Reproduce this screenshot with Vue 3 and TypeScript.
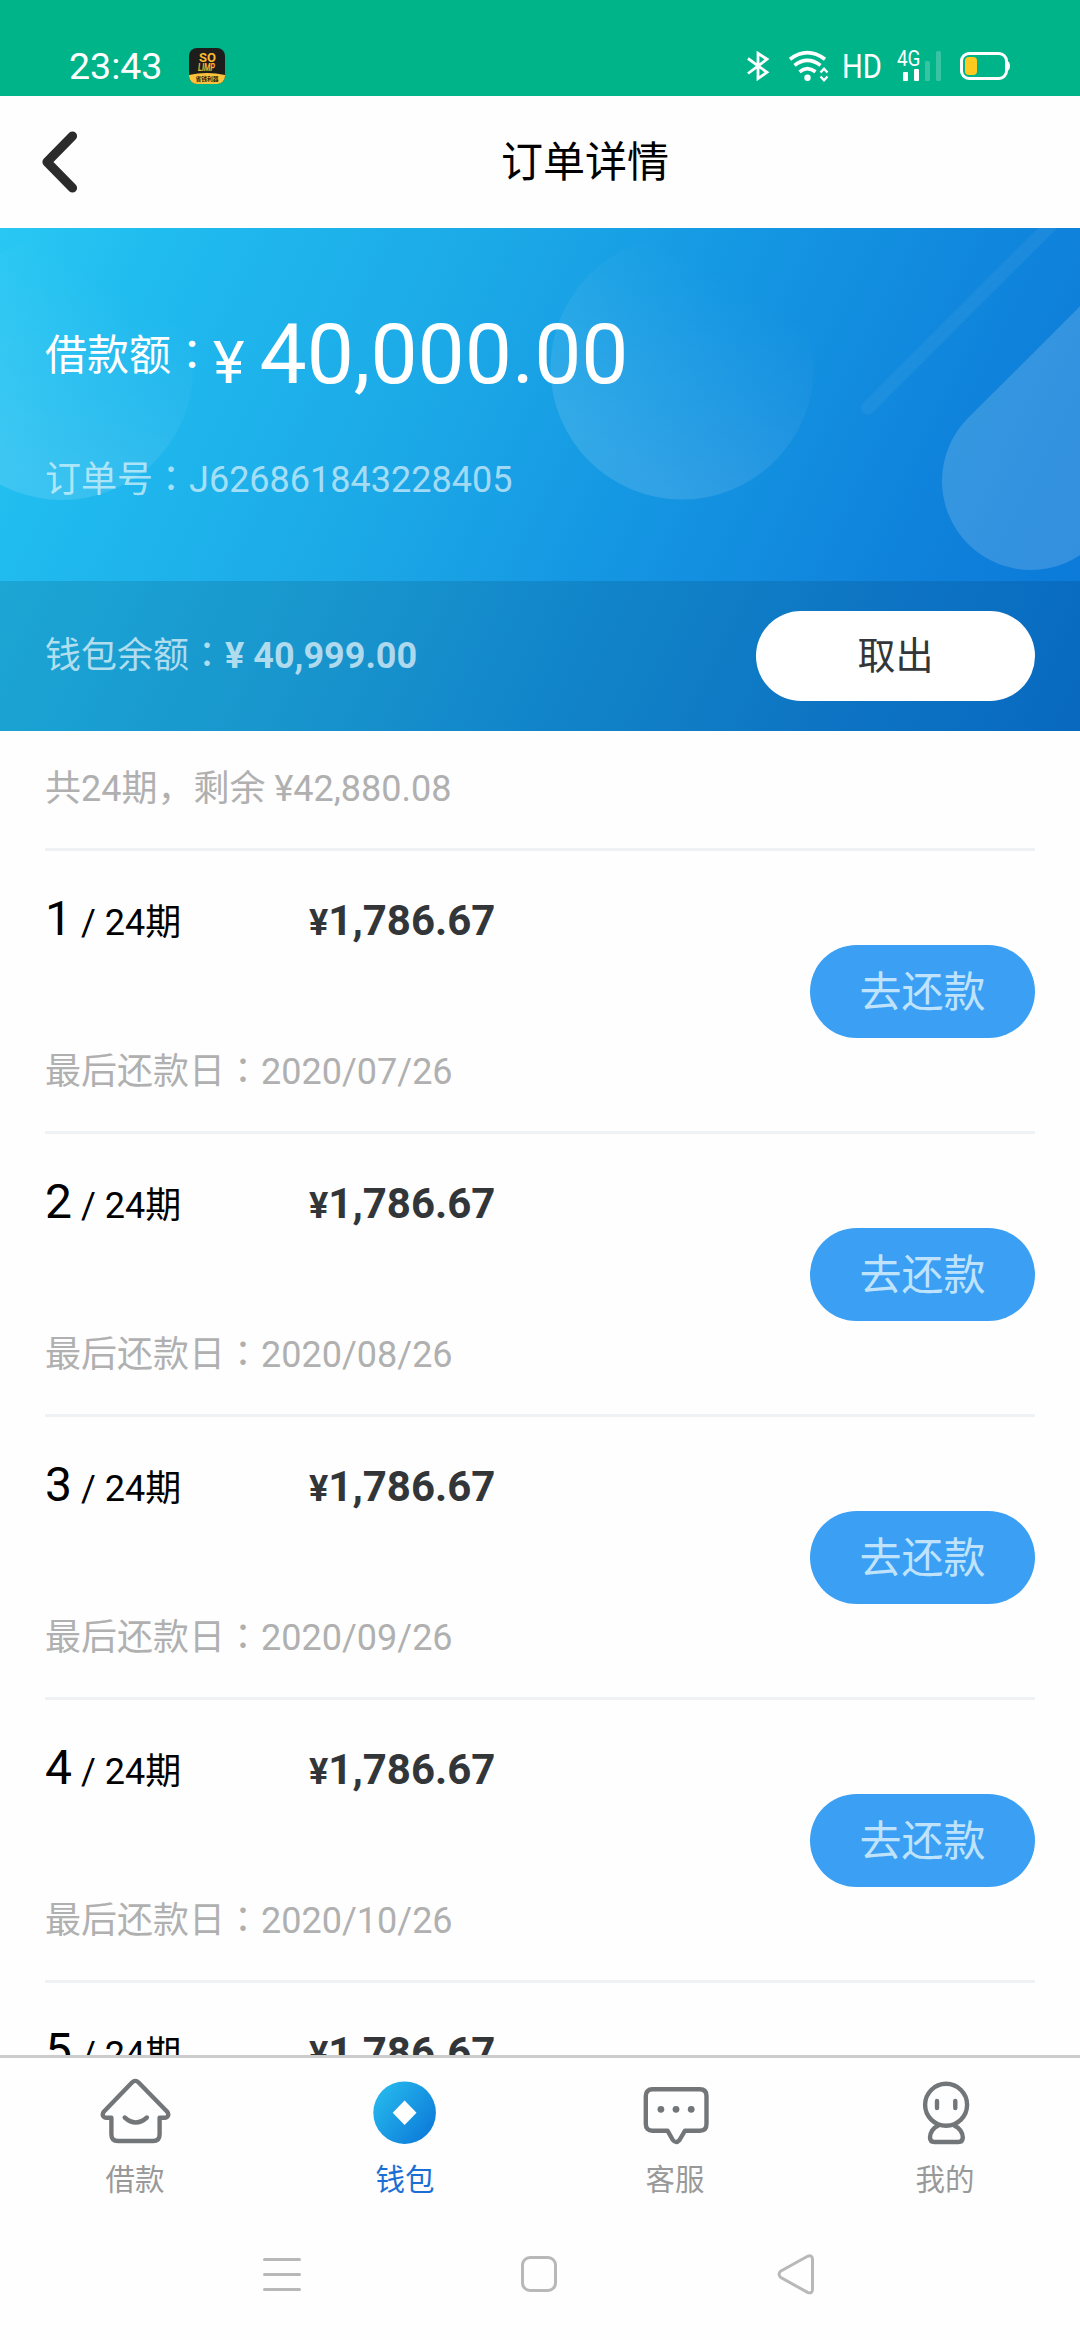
<script setup lang="ts">
interface Installment {
  no: number
  amount: string
  due?: string
}

const total = 24
const installments: Installment[] = [
  { no: 1, amount: '1,786.67', due: '2020/07/26' },
  { no: 2, amount: '1,786.67', due: '2020/08/26' },
  { no: 3, amount: '1,786.67', due: '2020/09/26' },
  { no: 4, amount: '1,786.67', due: '2020/10/26' },
  { no: 5, amount: '1,786.67' },
]
</script>

<template>
  <div class="page">
    <header class="status">
      <span class="time">23:43</span>
      <svg class="app-badge" width="36" height="36" viewBox="0 0 36 36">
        <defs>
          <clipPath id="badge"><rect width="36" height="36" rx="8" /></clipPath>
        </defs>
        <g clip-path="url(#badge)">
          <rect width="36" height="36" fill="#1d1d1b" />
          <path d="M0 27Q18 23 36 27V36H0Z" fill="#fcc33c" />
          <text x="18.6" y="14" class="badge-a">SO</text>
          <text x="17.500" y="22.600" class="badge-b" textLength="17" lengthAdjust="spacingAndGlyphs">LIMP</text>
          <text x="18" y="33" class="badge-c">省钱利器</text>
        </g>
      </svg>
      <div class="indicators">
        <svg class="bt" width="24" height="32" viewBox="0 0 24 32" fill="none" stroke="#fff" stroke-width="2.8">
          <path d="M2 8.5L21 22.3L12 28.6V3.4L21 9.2L2 23.5" />
        </svg>
        <svg class="wifi" width="42" height="32" viewBox="0 0 42 32" fill="none" stroke="#fff" stroke-width="3.6">
          <path d="M2 9.2Q19.300 -4 37 9.2" />
          <path d="M6.500 15.400Q19.300 5.500 32.500 15.400" />
          <path d="M11.500 21.800Q19.300 15.500 27.500 21.800" />
          <circle cx="19.500" cy="27.800" r="3.200" fill="#fff" stroke="none" />
          <path d="M32.500 22.500L36 18.800L39.500 22.500M32.500 26.500L36 30.200L39.500 26.500" stroke-width="2.400" />
        </svg>
        <svg class="hd" width="56" height="32" viewBox="0 0 56 32" fill="#fff">
          <text x="1" y="28.300" textLength="40" lengthAdjust="spacingAndGlyphs">HD</text>
        </svg>
        <svg class="signal" width="46" height="32" viewBox="0 0 46 32" fill="#fff">
          <text x="0" y="16" class="net" textLength="23.500" lengthAdjust="spacingAndGlyphs">4G</text>
          <rect x="6" y="22" width="5" height="9" rx="1" />
          <rect x="17" y="19" width="5" height="12" rx="1" />
          <rect x="28" y="11" width="5" height="20" rx="1.500" opacity=".22" />
          <rect x="39" y="1" width="5" height="30" rx="1.500" opacity=".22" />
        </svg>
        <svg class="battery" width="52" height="32" viewBox="0 0 52 32">
          <rect x="2.500" y="3.500" width="45" height="25" rx="7.500" fill="none" stroke="#fff" stroke-width="3" />
          <path d="M48.500 11Q51 12 51 16T48.500 21Z" fill="#fff" />
          <rect x="6" y="7" width="12" height="18" rx="4" fill="#ffc920" />
        </svg>
      </div>
    </header>

    <nav class="titlebar">
      <svg width="60" height="72" viewBox="0 0 60 72" fill="none" stroke="#2b2b2b" stroke-width="9.200" stroke-linecap="round" stroke-linejoin="round">
        <path d="M42.500 10L17 36L42.500 62" />
      </svg>
      <h1>订单详情</h1>
    </nav>

    <section class="hero">
      <svg class="hero-art" width="1080" height="503" viewBox="0 228 1080 503">
        <defs>
          <linearGradient id="drop" x1=".2" y1=".8" x2=".62" y2=".12">
            <stop offset="0" stop-color="#fff" stop-opacity=".12" />
            <stop offset="1" stop-color="#fff" stop-opacity="0" />
          </linearGradient>
        </defs>
        <circle cx="62" cy="369" r="131" fill="url(#drop)" />
        <circle cx="682" cy="368" r="131.500" fill="url(#drop)" />
        <path d="M867.500 408L1100 175.500" stroke="#fff" stroke-opacity=".05" stroke-width="13.500" stroke-linecap="round" />
        <path d="M1031 481L1231 281" stroke="#fff" stroke-opacity=".16" stroke-width="178" stroke-linecap="round" />
      </svg>
      <div class="hero-main">
        <div class="loan">
          <span class="loan-label">借款额<i>：</i></span>
          <span class="loan-value"><small>¥ </small>40,000.00</span>
        </div>
        <div class="order-no">订单号<i>：</i>J626861843228405</div>
      </div>
      <div class="wallet">
        <div class="wallet-text">钱包余额<i>：</i><b>¥ 40,999.00</b></div>
        <button class="withdraw">取出</button>
      </div>
    </section>

    <main class="plan">
      <div class="summary">共24期，剩余 ¥42,880.08</div>
      <article v-for="item in installments" :key="item.no" class="row">
        <div class="info">
          <div class="line">
            <span class="period"><span class="no">{{ item.no }}</span> / {{ total }}期</span>
            <span class="amount"><small>¥</small>{{ item.amount }}</span>
          </div>
          <div v-if="item.due" class="due">最后还款日<i>：</i>{{ item.due }}</div>
        </div>
        <button v-if="item.due" class="pay">去还款</button>
      </article>
    </main>

    <footer class="tabs">
      <div class="tab">
        <svg width="72" height="72" viewBox="0 0 72 72" class="line-icon">
          <path d="M33 6.500L5 35.500C2.500 38.500 4 41.800 7.500 41.800H12.400V58.500Q12.400 65 19 65H54Q60.600 65 60.600 58.500V41.800H65.500C69 41.800 70.500 38.500 68 35.500L39.600 6.500Q36.300 3.200 33 6.500Z" />
          <path d="M25.700 41.500Q36.800 51.500 47.900 41.500" />
        </svg>
        <span>借款</span>
      </div>
      <div class="tab active">
        <svg width="72" height="72" viewBox="0 0 72 72">
          <defs>
            <linearGradient id="coin" x1="0" y1="0.100" x2="1" y2=".9">
              <stop offset="0" stop-color="#27bdee" />
              <stop offset="1" stop-color="#0b76d8" />
            </linearGradient>
          </defs>
          <circle cx="35.600" cy="36.700" r="31.300" fill="url(#coin)" />
          <path d="M35.600 24.500L47.500 36.700L35.600 48.900L23.700 36.700Z" fill="#fff" />
        </svg>
        <span>钱包</span>
      </div>
      <div class="tab">
        <svg width="72" height="72" viewBox="0 0 72 72" class="line-icon">
          <path d="M13.500 13.300H60.800Q67.500 13.300 67.500 20V48Q67.500 54.700 60.800 54.700H46L40.500 64Q37 68 33.800 64L28.500 54.700H13.500Q6.800 54.700 6.800 48V20Q6.800 13.300 13.500 13.300Z" />
          <g class="dots">
            <circle cx="21.900" cy="33.300" r="3.400" />
            <circle cx="37" cy="33.300" r="3.400" />
            <circle cx="52.200" cy="33.300" r="3.400" />
          </g>
        </svg>
        <span>客服</span>
      </div>
      <div class="tab">
        <svg width="72" height="72" viewBox="0 0 72 72" class="line-icon">
          <circle cx="37.100" cy="28.800" r="21" />
          <path d="M28 25V32M46.300 25V32" />
          <path d="M29.500 49.500C24 51.500 21 57 21 61.500Q21 66 25.500 66H49.200Q53.800 66 53.800 61.500C53.800 57 50.500 51.500 45 49.500" />
        </svg>
        <span>我的</span>
      </div>
    </footer>

    <div class="sysnav">
      <svg width="44" height="44" viewBox="0 0 44 44"><path d="M4.500 7.500H39.500M4.500 22.500H39.500M4.500 37.500H39.500" /></svg>
      <svg width="44" height="44" viewBox="0 0 44 44"><rect x="5.500" y="5.500" width="33" height="33" rx="7.500" /></svg>
      <svg width="44" height="44" viewBox="0 0 44 44"><path d="M6.500 19.300L33.500 4.300Q38.500 2.500 38.500 7.500V37.200Q38.500 42.200 33.500 40.400L6.500 25.300Q3.500 22.300 6.500 19.300Z" /></svg>
    </div>
  </div>
</template>

<style>
body {
  background: #fefefe;
}
</style>

<style scoped>
.page {
  width: 1080px;
  height: 2340px;
  display: flex;
  flex-direction: column;
  overflow: hidden;
  background: #fefefe;
  color: #000;
  font-family: Roboto, "Noto Sans CJK SC", sans-serif;
  font-size: 36px;
  line-height: 50px;
}

i {
  font-style: normal;
  font-family: "Noto Sans CJK TC", sans-serif;
  line-height: 1;
}

button {
  border: 0;
  padding: 0 0 7px;
  font-family: inherit;
}

.status {
  flex: none;
  height: 96px;
  display: flex;
  align-items: flex-start;
  padding-left: 69px;
  background: #00b48a;
  color: #fff;
}

.time {
  width: 120px;
  margin-top: 41px;
  font-size: 37.5px;
}

.app-badge {
  margin-top: 48px;
}

.badge-a,
.badge-b {
  fill: #fbb831;
  text-anchor: middle;
  font-weight: 700;
}

.badge-a {
  font-size: 13px;
}

.badge-b {
  font-size: 10px;
  font-style: italic;
}

.badge-c {
  fill: #2a2108;
  text-anchor: middle;
  font-size: 5.8px;
  font-weight: 700;
}

.indicators {
  display: flex;
  margin-top: 50px;
  margin-left: 521px;
}

.wifi {
  margin-left: 18px;
}

.hd {
  margin-left: 11px;
  font-size: 34px;
}

.net {
  font-size: 22px;
}

.battery {
  margin-left: 16px;
}

.titlebar {
  flex: none;
  height: 132px;
  display: flex;
  align-items: center;
  padding-left: 30px;
}

h1 {
  margin: 1px 0 0 411px;
  font-size: 42px;
  font-weight: 400;
}

.hero {
  flex: none;
  position: relative;
  height: 503px;
  background: linear-gradient(116deg, #29c8f3 0%, #20bbef 13%, #1ca9e7 38%, #1598e3 56%, #0f82db 81%, #0b7ad9 95%, #0a76d6 100%);
}

.hero-art {
  position: absolute;
  inset: 0;
}

.hero-main {
  position: relative;
  height: 353px;
  box-sizing: border-box;
  padding: 77px 45px 0;
}

.loan {
  display: flex;
  align-items: flex-start;
  height: 100px;
  color: #fff;
}

.loan-label {
  margin-top: 21px;
  font-size: 42px;
  line-height: 60px;
}

.loan-value {
  font-size: 84px;
  line-height: 100px;
}

.loan-value small {
  font-size: 60px;
  line-height: 60px;
}

.order-no {
  margin-top: 50px;
  color: rgba(255, 255, 255, 0.62);
}

.wallet {
  position: relative;
  height: 150px;
  box-sizing: border-box;
  display: flex;
  align-items: center;
  justify-content: space-between;
  padding: 0 45px;
  background: rgba(0, 0, 0, 0.11);
}

.wallet-text {
  color: rgba(255, 255, 255, 0.66);
}

.withdraw {
  width: 279px;
  height: 90px;
  border-radius: 45px;
  background: #fff;
  color: #333639;
  font-size: 38px;
}

.plan {
  flex: none;
  height: 1324px;
  overflow: hidden;
  padding: 0 45px;
}

.summary {
  height: 117px;
  box-sizing: border-box;
  padding-top: 33px;
  color: #b0b0b0;
}

.row {
  height: 283px;
  box-sizing: border-box;
  display: flex;
  align-items: center;
  justify-content: space-between;
  border-top: 3px solid #eef2f5;
}

.info {
  align-self: flex-start;
  padding-top: 38px;
}

.line {
  display: flex;
  align-items: baseline;
  height: 60px;
  line-height: 60px;
}

.period {
  width: 264px;
}

.no {
  font-size: 48px;
}

.amount {
  font-size: 42px;
  font-weight: 700;
  color: #333639;
}

.amount small {
  font-size: 36px;
}

.due {
  margin-top: 98px;
  color: #b0b0b0;
}

.pay {
  width: 225px;
  height: 93px;
  margin-top: 1px;
  border-radius: 46.5px;
  background: #3b9ff3;
  color: #bfe3fd;
  font-size: 42px;
}

.tabs {
  flex: none;
  height: 153px;
  box-sizing: border-box;
  display: flex;
  border-top: 3px solid #ccc;
}

.tab {
  flex: 1;
  display: flex;
  flex-direction: column;
  align-items: center;
  padding-top: 18px;
  color: #999;
}

.tab span {
  margin-top: 12px;
  font-size: 29.5px;
  line-height: 40px;
}

.tab.active {
  color: #1b6fd4;
}

.line-icon {
  fill: none;
  stroke: #727678;
  stroke-width: 4.4;
  stroke-linecap: round;
  stroke-linejoin: round;
}

.dots {
  fill: #727678;
  stroke: none;
}

.sysnav {
  flex: none;
  height: 132px;
  display: flex;
  align-items: center;
  padding-left: 260px;
  gap: 213px;
  fill: none;
  stroke: #b8b8b8;
  stroke-width: 3;
  stroke-linecap: round;
}
</style>
